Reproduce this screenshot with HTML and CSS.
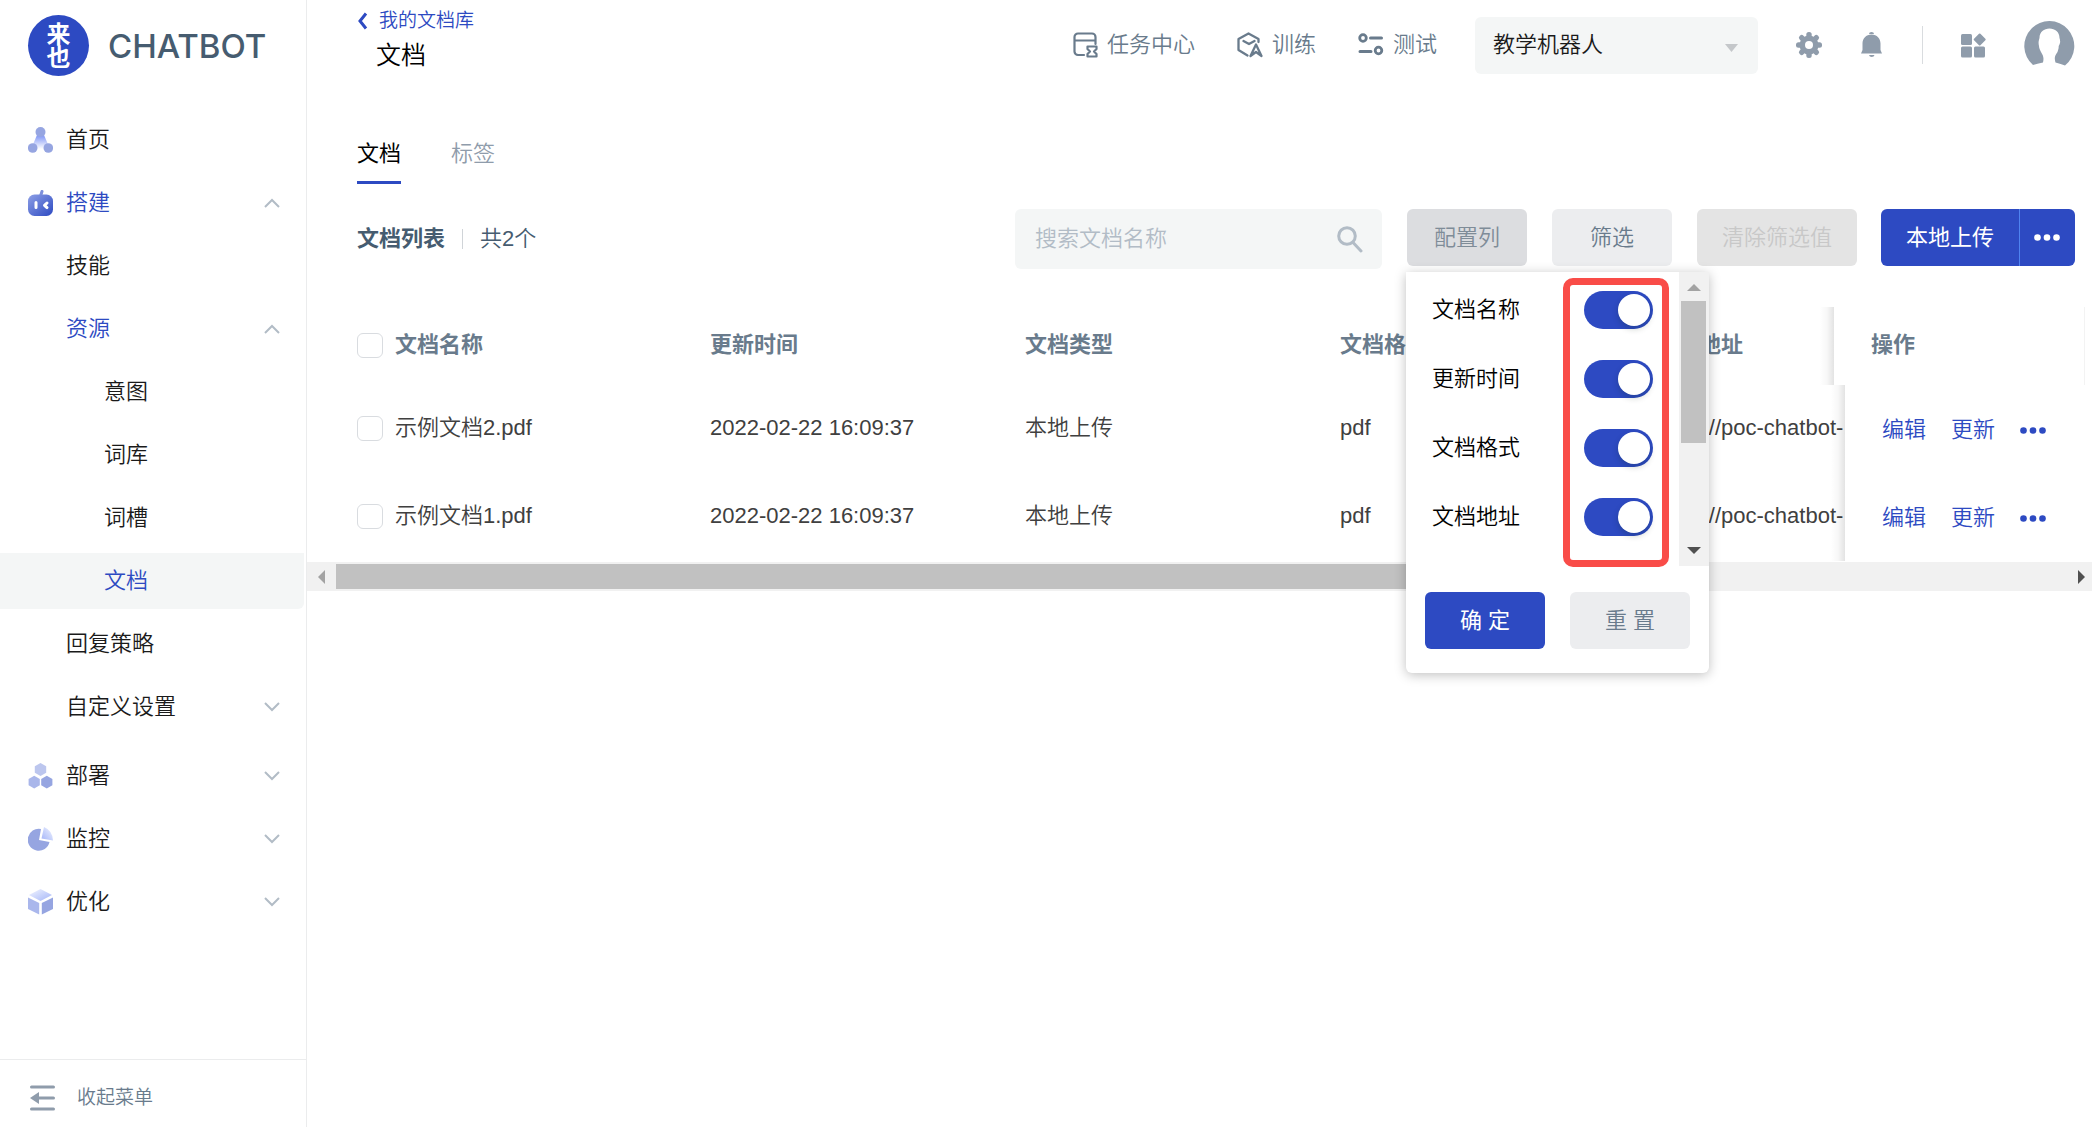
FILE: index.html
```html
<!DOCTYPE html>
<html lang="zh-CN">
<head>
<meta charset="utf-8">
<title>文档</title>
<link rel="stylesheet" href="styles.css">
</head>
<body>
<div class="app">
  <aside class="sidebar">
    <div class="brand">
      <span class="brand-mark"><span>来</span><span>也</span></span>
      <span class="brand-name">CHATBOT</span>
    </div>
    <nav class="menu">
      <a class="menu-item" href="#">
        <svg class="menu-icon" viewBox="0 0 25 26"><defs><linearGradient id="g1" x1="0" y1="0" x2="0" y2="1"><stop offset="0" stop-color="#7d93f5"/><stop offset="1" stop-color="#fff"/></linearGradient></defs><path d="M9 8h7l6 14H3z" fill="url(#g1)"/><g fill="#96a5e1"><circle cx="12.500" cy="5" r="5"/><circle cx="4.700" cy="21" r="4.800"/><circle cx="20.300" cy="21" r="4.800"/></g></svg>
        <span>首页</span>
      </a>
      <a class="menu-item active" href="#">
        <svg class="menu-icon" viewBox="0 0 25 26"><defs><linearGradient id="g2" x1="0" y1="0" x2="1" y2="1"><stop offset="0" stop-color="#8d9fe6"/><stop offset="1" stop-color="#2d4ac2"/></linearGradient></defs><path d="M12.500 6l1.500-4.500" stroke="#7d90dc" stroke-width="3" stroke-linecap="round"/><rect y="4.500" width="25" height="21.500" rx="6.500" fill="url(#g2)"/><path d="M8 12.500v5M19 13l-2.500 2.300 2.500 2.300" fill="none" stroke="#fff" stroke-width="3" stroke-linecap="round" stroke-linejoin="round"/></svg>
        <span>搭建</span>
        <svg class="chevron" viewBox="0 0 16 10"><path d="M1 9l7-7 7 7"/></svg>
      </a>
      <a class="menu-item level-2" href="#"><span>技能</span></a>
      <a class="menu-item level-2 active" href="#">
        <span>资源</span>
        <svg class="chevron" viewBox="0 0 16 10"><path d="M1 9l7-7 7 7"/></svg>
      </a>
      <a class="menu-item level-3" href="#"><span>意图</span></a>
      <a class="menu-item level-3" href="#"><span>词库</span></a>
      <a class="menu-item level-3" href="#"><span>词槽</span></a>
      <a class="menu-item level-3 active current" href="#"><span>文档</span></a>
      <a class="menu-item level-2" href="#"><span>回复策略</span></a>
      <a class="menu-item level-2 group-end" href="#">
        <span>自定义设置</span>
        <svg class="chevron" viewBox="0 0 16 10"><path d="M1 1l7 7 7-7"/></svg>
      </a>
      <a class="menu-item" href="#">
        <svg class="menu-icon" viewBox="0 0 25 26"><path d="M12.500 0l5.700 3.200v6.500l-5.700 3.200-5.700-3.200V3.200z" fill="#bcc6ee"/><path d="M6.200 12.800l5.600 3.200v6.300l-5.600 3.200-5.600-3.200V16z" fill="#a9b6ea"/><path d="M18.800 12.800l5.600 3.200v6.300l-5.600 3.200-5.600-3.200V16z" fill="#96a5e1"/></svg>
        <span>部署</span>
        <svg class="chevron" viewBox="0 0 16 10"><path d="M1 1l7 7 7-7"/></svg>
      </a>
      <a class="menu-item" href="#">
        <svg class="menu-icon" viewBox="0 0 25 26"><defs><linearGradient id="g3" x1="1" y1="0" x2="0" y2="1"><stop offset="0" stop-color="#f3f6ff"/><stop offset="1" stop-color="#a3b4f8"/></linearGradient></defs><path d="M13 3A11 11 0 1 0 21.500 16L11 14z" fill="#96a5e1"/><path d="M16 1q8.500 3.500 9 13.500L13.500 12.500z" fill="url(#g3)"/></svg>
        <span>监控</span>
        <svg class="chevron" viewBox="0 0 16 10"><path d="M1 1l7 7 7-7"/></svg>
      </a>
      <a class="menu-item" href="#">
        <svg class="menu-icon" viewBox="0 0 25 26"><defs><linearGradient id="g4" x1="0" y1="0" x2="1" y2="1"><stop offset="0" stop-color="#f3f6ff"/><stop offset="1" stop-color="#a3b4f8"/></linearGradient></defs><path d="M12.500 0l11.500 6-11.500 6L1 6z" fill="url(#g4)"/><path d="M0 8.500l11.200 5.500v11.500L0 20z" fill="#aab7ec"/><path d="M25 8.500l-11.200 5.500v11.500L25 20z" fill="#96a5e1"/></svg>
        <span>优化</span>
        <svg class="chevron" viewBox="0 0 16 10"><path d="M1 1l7 7 7-7"/></svg>
      </a>
    </nav>
    <button class="collapse" type="button">
      <svg width="25" height="26" viewBox="0 0 25 26"><path d="M1.500 2h22M1.500 24h22M8 13h15.500" stroke="#8f9cab" stroke-width="3" stroke-linecap="round"/><path d="M0 13l9-6v12z" fill="#8f9cab"/></svg>
      <span>收起菜单</span>
    </button>
  </aside>

  <main class="main">
    <header class="topbar">
      <div class="heading">
        <a class="back" href="#"><svg width="11" height="18" viewBox="0 0 11 18"><path d="M9 1.500L3 9l6 7.500" fill="none" stroke="#2d4ac2" stroke-width="3"/></svg>我的文档库</a>
        <h1>文档</h1>
      </div>
      <nav class="tools">
        <a href="#"><svg width="25" height="26" viewBox="0 0 25 26" fill="none" stroke="#697b8c" stroke-width="2.200"><path d="M11 23H5a3.500 3.500 0 0 1-3.500-3.500V5A3.500 3.500 0 0 1 5 1.500h14A3.500 3.500 0 0 1 22.500 5v7M1.500 8.500h21" stroke-linecap="round"/><path d="M14.500 14.500h9v2.500L21 19.500l2.500 2.500v2.500h-9V22l2.500-2.500-2.500-2.500z" stroke-linejoin="round"/></svg>任务中心</a>
        <a href="#"><svg width="26" height="26" viewBox="0 0 26 26" fill="none" stroke="#697b8c" stroke-width="2.300" stroke-linejoin="round"><path d="M10.500 23.500L1.500 18V7L11.500 1.500 21.500 7v3" stroke-linecap="round"/><path d="M6.500 9l5.500 3 5.500-3" stroke-linecap="round"/><path d="M19 12.500l5.500 11.500-5.500-4-5.500 4z"/></svg>训练</a>
        <a href="#"><svg width="26" height="26" viewBox="0 0 26 26" fill="none" stroke="#697b8c" stroke-width="2.800"><circle cx="5" cy="6" r="3.300"/><circle cx="20.500" cy="18.500" r="3.300"/><path d="M12.500 6h11M2 19.500h11" stroke-width="3" stroke-linecap="round"/></svg>测试</a>
      </nav>
      <div class="robot-select">
        <select aria-label="机器人"><option>教学机器人</option></select>
        <svg class="caret" width="13" height="8" viewBox="0 0 13 8"><path d="M0 0h13L6.500 8z" fill="#c4c7ca"/></svg>
      </div>
      <button class="icon-button gear" type="button" aria-label="设置"><svg width="26" height="26" viewBox="0 0 26 26"><g fill="#8f9cab"><circle cx="13" cy="13" r="9.500"/><g id="teeth"><rect x="10.300" y="0" width="5.400" height="26" rx="2.500"/><rect x="0" y="10.300" width="26" height="5.400" rx="2.500"/></g><use href="#teeth" transform="rotate(45 13 13)"/></g><circle cx="13" cy="13" r="4" fill="#fff"/></svg></button>
      <button class="icon-button bell" type="button" aria-label="通知"><svg width="21" height="26" viewBox="0 0 21 26" fill="#8f9cab"><path d="M8 2a2.500 2 0 0 1 5 0zM8 23h5.500a2.800 2.500 0 0 1-5.500 0z"/><path d="M10.500 2.500c5.500 0 9 4 9 9V18l1.500 3.500H0L1.500 18v-6.500c0-5 3.500-9 9-9z"/></svg></button>
      <span class="divider"></span>
      <button class="icon-button grid" type="button" aria-label="应用"><svg width="25" height="25" viewBox="0 0 25 25" fill="#8f9cab"><rect y="1" width="11" height="11" rx="1.500"/><rect y="13.500" width="11" height="11" rx="1.500"/><rect x="13" y="13.500" width="11" height="11" rx="1.500"/><rect x="14.200" y="2" width="9" height="9" rx="1" transform="rotate(45 18.700 6.500)"/></svg></button>
      <button class="icon-button avatar" type="button" aria-label="账户"><svg width="51" height="50" viewBox="0 0 51 50"><path d="M9 45A25 25 0 1 1 41 45.500Q37 44 31.500 42.500C30 37 31 36 33.500 32c1-3 1.200-4 1.200-6C37 22 36 20 35.500 18 35.500 12 31 8.500 25.500 8.500S15.500 12 15.500 18c-.5 2-1.500 4-.5 8 0 2 1 4 2 6 2.500 4 3 6 2 10.500Q13 43.500 9 45z" fill="#8f9cab"/></svg></button>
    </header>

    <div class="tabs" role="tablist">
      <button class="tab selected" type="button" role="tab" aria-selected="true">文档</button>
      <button class="tab" type="button" role="tab" aria-selected="false">标签</button>
    </div>

    <section class="toolbar">
      <h2>文档列表</h2>
      <span class="count">共2个</span>
      <label class="search">
        <input type="text" placeholder="搜索文档名称" aria-label="搜索文档名称">
        <svg width="26" height="27" viewBox="0 0 26 27" fill="none" stroke="#b2bcc6" stroke-width="3" stroke-linecap="round"><circle cx="10" cy="10" r="8.300"/><path d="M16.500 17l7.500 8"/></svg>
      </label>
      <div class="config">
        <button class="btn pressed" type="button">配置列</button>
        <div class="popup">
          <div class="popup-scroll">
            <div class="switches">
              <label>文档名称<input class="switch" type="checkbox" checked></label>
              <label>更新时间<input class="switch" type="checkbox" checked></label>
              <label>文档格式<input class="switch" type="checkbox" checked></label>
              <label>文档地址<input class="switch" type="checkbox" checked></label>
            </div>
            <div class="v-scrollbar">
              <svg width="14" height="7" viewBox="0 0 14 7"><path d="M0 7l7-7 7 7z" fill="#a3a3a3"/></svg>
              <span class="v-track"><span class="v-thumb"></span></span>
              <svg width="14" height="7" viewBox="0 0 14 7"><path d="M0 0l7 7 7-7z" fill="#505050"/></svg>
            </div>
          </div>
          <div class="popup-actions">
            <button class="btn primary" type="button">确 定</button>
            <button class="btn" type="button">重 置</button>
          </div>
          <span class="highlight"></span>
        </div>
      </div>
      <button class="btn" type="button">筛选</button>
      <button class="btn" type="button" disabled>清除筛选值</button>
      <div class="split">
        <button class="btn primary" type="button">本地上传</button>
        <button class="btn primary more" type="button" aria-label="更多"><svg width="26" height="7" viewBox="0 0 26 7" fill="#fff"><circle cx="3.500" cy="3.500" r="3.300"/><circle cx="13" cy="3.500" r="3.300"/><circle cx="22.500" cy="3.500" r="3.300"/></svg></button>
      </div>
    </section>

    <table class="docs">
      <thead>
        <tr><th><input class="check" type="checkbox" aria-label="全选"></th><th>文档名称</th><th>更新时间</th><th>文档类型</th><th>文档格式</th><th>文档地址</th><th class="ops">操作</th></tr>
      </thead>
      <tbody>
        <tr><td><input class="check" type="checkbox" aria-label="选择 示例文档2.pdf"></td><td>示例文档2.pdf</td><td>2022-02-22 16:09:37</td><td>本地上传</td><td>pdf</td><td>https://poc-chatbot-</td>
          <td class="ops"><a href="#">编辑</a><a href="#">更新</a><button class="row-more" type="button" aria-label="更多"><svg width="26" height="7" viewBox="0 0 26 7" fill="#2d4ac2"><circle cx="3.500" cy="3.500" r="3.300"/><circle cx="13" cy="3.500" r="3.300"/><circle cx="22.500" cy="3.500" r="3.300"/></svg></button></td></tr>
        <tr><td><input class="check" type="checkbox" aria-label="选择 示例文档1.pdf"></td><td>示例文档1.pdf</td><td>2022-02-22 16:09:37</td><td>本地上传</td><td>pdf</td><td>https://poc-chatbot-</td>
          <td class="ops"><a href="#">编辑</a><a href="#">更新</a><button class="row-more" type="button" aria-label="更多"><svg width="26" height="7" viewBox="0 0 26 7" fill="#2d4ac2"><circle cx="3.500" cy="3.500" r="3.300"/><circle cx="13" cy="3.500" r="3.300"/><circle cx="22.500" cy="3.500" r="3.300"/></svg></button></td></tr>
      </tbody>
    </table>
    <div class="h-scrollbar">
      <svg width="7" height="14" viewBox="0 0 7 14"><path d="M7 0L0 7l7 7z" fill="#a3a3a3"/></svg>
      <span class="h-track"><span class="h-thumb"></span></span>
      <svg width="7" height="14" viewBox="0 0 7 14"><path d="M0 0l7 7-7 7z" fill="#505050"/></svg>
    </div>
  </main>
</div>
</body>
</html>
```
FILE: styles.css
```css
* {
  box-sizing: border-box;
}

body {
  margin: 0;
  background: #fff;
  color: #1a1a1a;
  font: 350 22px/32px "Liberation Sans", "Noto Sans CJK SC", sans-serif;
}

a {
  color: inherit;
  text-decoration: none;
}

button,
input,
select {
  margin: 0;
  padding: 0;
  border: 0;
  background: none;
  color: inherit;
  font: inherit;
}

svg {
  display: block;
  flex: none;
}

.app {
  display: flex;
  min-height: 100vh;
}

/* Sidebar */
.sidebar {
  display: flex;
  flex: none;
  flex-direction: column;
  width: 307px;
  border-right: 1px solid #ebeced;
}

.brand {
  display: flex;
  align-items: center;
  gap: 19px;
  padding: 15px 20px 0 28px;
}

.brand-mark {
  display: flex;
  flex: none;
  flex-direction: column;
  align-items: center;
  justify-content: center;
  width: 61px;
  height: 61px;
  border-radius: 50%;
  background: #2d4ac2;
  color: #fff;
  font-size: 24px;
  font-weight: 700;
  line-height: 23px;
}

.brand-name {
  color: #465c70;
  font-family: Inter, "Liberation Sans", sans-serif;
  font-size: 33px;
  font-weight: 500;
}

.menu {
  display: flex;
  flex: 1;
  flex-direction: column;
  gap: 7px;
  padding: 36px 2px 0 0;
}

.menu-item {
  display: flex;
  align-items: center;
  height: 56px;
  padding: 0 24px 0 28px;
}

.menu-item.level-2 {
  padding-left: 66px;
}

.menu-item.level-3 {
  padding-left: 104px;
}

.menu-item.active {
  color: #2d4ac2;
}

.menu-item.current {
  border-radius: 0 0 6px 0;
  background: #f4f6f6;
}

.group-end {
  margin-bottom: 6px;
}

.menu-icon {
  width: 25px;
  height: 26px;
  margin-right: 13px;
}

.chevron {
  width: 16px;
  height: 10px;
  margin-left: auto;
  fill: none;
  stroke: #b2bcc6;
  stroke-width: 2;
}

.collapse {
  display: flex;
  align-items: center;
  gap: 22px;
  height: 68px;
  padding: 8px 30px 0;
  border-top: 1px solid #ebeced;
  color: #697b8c;
  font-size: 19px;
}

/* Top bar */
.main {
  flex: 1;
  min-width: 0;
}

.topbar {
  display: flex;
  align-items: center;
  height: 90px;
  padding: 0 17px 0 50px;
}

.heading {
  flex: 1;
  align-self: flex-start;
  padding-top: 7px;
}

.back {
  display: flex;
  align-items: center;
  gap: 11px;
  color: #2d4ac2;
  font-size: 19px;
  line-height: 28px;
}

h1 {
  margin: 2px 0 0 19px;
  color: #000;
  font-size: 25px;
  font-weight: 350;
  line-height: 36px;
}

.tools {
  display: flex;
  gap: 42px;
  margin-right: 38px;
  color: #697b8c;
}

.tools a {
  display: flex;
  align-items: center;
  gap: 9px;
}

.robot-select {
  position: relative;
  width: 283px;
}

.robot-select select {
  width: 100%;
  height: 57px;
  padding: 0 18px;
  border-radius: 6px;
  background: #f4f6f6;
  appearance: none;
}

.caret {
  position: absolute;
  top: 27px;
  right: 20px;
}

.gear {
  margin-left: 38px;
}

.bell {
  margin-left: 39px;
}

.divider {
  width: 1px;
  height: 38px;
  margin: 0 38px 0 40px;
  background: #d9dcdf;
}

.avatar {
  margin-left: 38px;
}

/* Tabs */
.tabs {
  display: flex;
  gap: 50px;
  padding: 48px 50px 0;
}

.tab {
  padding-bottom: 11px;
  border-bottom: 3px solid transparent;
  color: #8f9cab;
}

.tab.selected {
  border-color: #2d4ac2;
  color: #000;
  font-weight: 400;
}

/* Toolbar */
.toolbar {
  display: flex;
  align-items: flex-start;
  gap: 25px;
  padding: 25px 17px 0 50px;
}

h2 {
  margin: 0;
  color: #465c70;
  font-size: 22px;
  font-weight: 700;
  line-height: 60px;
}

.count {
  display: flex;
  flex: 1;
  align-items: center;
  gap: 17px;
  height: 60px;
  margin-left: -8px;
  color: #465c70;
}

.count::before {
  width: 1px;
  height: 20px;
  background: #d0d4d8;
  content: "";
}

.search {
  display: flex;
  align-items: center;
  width: 367px;
  height: 60px;
  padding: 0 19px 0 20px;
  border-radius: 6px;
  background: #f4f6f6;
}

.search input {
  flex: 1;
  min-width: 0;
  outline: 0;
}

.search input::placeholder {
  color: #b2bcc6;
}

.btn {
  min-width: 120px;
  height: 57px;
  padding: 0 25px;
  border-radius: 6px;
  background: #ecedef;
  color: #697b8c;
}

.btn.pressed {
  background: #dcdde0;
  color: #7f8c98;
}

.btn:disabled {
  background: #e4e4e4;
  color: #c8c8c8;
}

.btn.primary {
  background: #2d4ac2;
  color: #fff;
  font-weight: 400;
}

.split {
  display: flex;
  margin-left: -1px;
}

.split .btn:first-child {
  border-radius: 6px 0 0 6px;
}

.split .more {
  min-width: 56px;
  padding: 0 14px;
  border-left: 1px solid #4f83f0;
  border-radius: 0 6px 6px 0;
}

/* Column settings popup */
.config {
  position: relative;
}

.popup {
  position: absolute;
  z-index: 2;
  top: 63px;
  left: -1px;
  width: 303px;
  border-radius: 0 0 6px 6px;
  background: #fff;
  box-shadow: 0 2px 12px rgba(0, 0, 0, 0.25);
}

.popup-scroll {
  display: flex;
  height: 294px;
}

.switches {
  flex: 1;
  padding: 3px 26px 0;
}

.switches label {
  display: flex;
  align-items: center;
  justify-content: space-between;
  height: 69px;
  color: #000;
}

.switch {
  width: 69px;
  height: 38px;
  padding: 3px;
  border-radius: 19px;
  background: #2d4ac2;
  appearance: none;
}

.switch::before {
  display: block;
  width: 32px;
  height: 32px;
  margin-left: auto;
  border-radius: 50%;
  background: #fff;
  box-shadow: 0 3px 6px rgba(0, 35, 11, 0.2);
  content: "";
}

.v-scrollbar {
  display: flex;
  flex-direction: column;
  align-items: center;
  width: 30px;
  padding: 12px 0;
  background: #f1f1f1;
}

.v-track {
  flex: 1;
  width: 25px;
  padding: 10px 0;
}

.v-thumb {
  display: block;
  height: 142px;
  background: #c1c1c1;
}

.popup-actions {
  display: flex;
  justify-content: space-between;
  padding: 26px 19px 24px;
}

.highlight {
  position: absolute;
  top: 6px;
  left: 157px;
  width: 106px;
  height: 289px;
  border: 7px solid #f94c48;
  border-radius: 10px;
  pointer-events: none;
}

/* Document table */
.docs {
  display: block;
  margin-top: 38px;
  color: #404040;
}

.docs thead,
.docs tbody {
  display: block;
}

.docs tr {
  display: grid;
  grid-template-columns: 38px repeat(4, 315px) minmax(0, 1fr) 247px;
  height: 88px;
  padding-left: 50px;
}

.docs thead tr {
  grid-template-columns: 38px repeat(4, 315px) minmax(0, 1fr) 251px;
  height: 78px;
  padding-right: 7px;
}

.docs th,
.docs td {
  display: flex;
  align-items: center;
  padding: 0 0 2px;
  white-space: nowrap;
}

.docs th {
  color: #697b8c;
  font-weight: 700;
}

.docs .ops {
  position: relative;
  gap: 25px;
  padding-left: 37px;
  background: #fff;
}

.docs th.ops {
  border-right: 1px solid #f3f3f3;
}

.docs .ops::before {
  position: absolute;
  top: 0;
  bottom: 0;
  left: -14px;
  width: 14px;
  background: linear-gradient(to right, transparent, rgba(0, 0, 0, 0.03) 50%, rgba(0, 0, 0, 0.11));
  content: "";
}

.docs td.ops {
  padding-top: 2px;
  padding-bottom: 0;
  color: #2d4ac2;
}

.check {
  width: 26px;
  height: 25px;
  border: 1px solid #d9dce0;
  border-radius: 6px;
  appearance: none;
}

.h-scrollbar {
  display: flex;
  align-items: center;
  height: 29px;
  margin-top: 1px;
  padding: 0 7px 0 11px;
  background: #f1f1f1;
}

.h-track {
  flex: 1;
  padding: 0 11px;
}

.h-thumb {
  display: block;
  width: 70%;
  height: 25px;
  background: #c1c1c1;
}
```
